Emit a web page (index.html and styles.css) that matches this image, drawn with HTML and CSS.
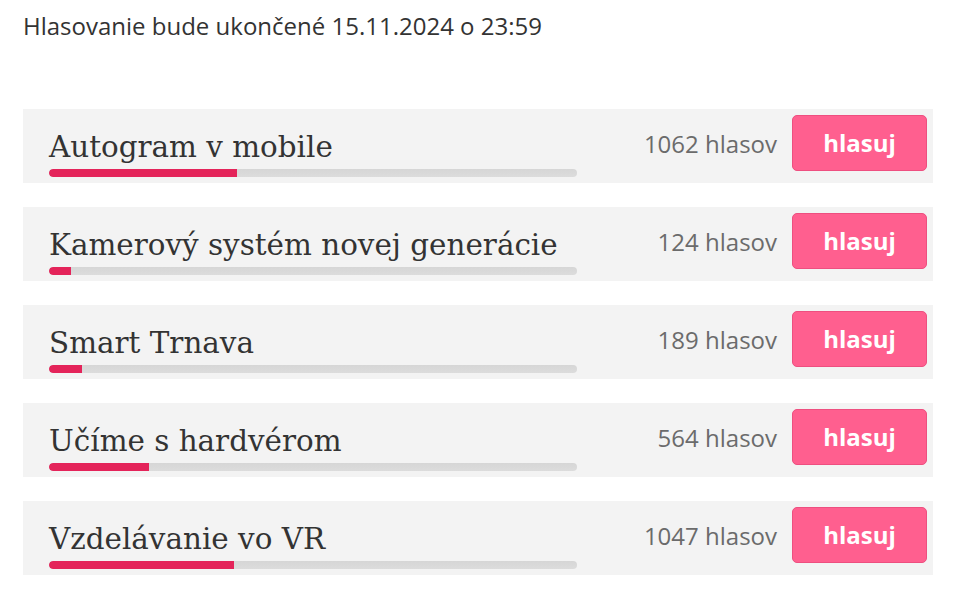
FILE: index.html
```html
<!DOCTYPE html>
<html lang="sk">
<head>
<meta charset="utf-8">
<link rel="stylesheet" href="styles.css">
</head>
<body>
<div class="page">
  <p class="deadline">Hlasovanie bude ukončené 15.11.2024 o 23:59</p>
  <ul class="poll">
    <li class="row">
      <div class="info">
        <div class="title">Autogram v mobile</div>
        <div class="bar"><div class="fill" style="width:35.57%"></div></div>
      </div>
      <div class="votes">1062 hlasov</div>
      <button class="vote">hlasuj</button>
    </li>
    <li class="row">
      <div class="info">
        <div class="title">Kamerový systém novej generácie</div>
        <div class="bar"><div class="fill" style="width:4.15%"></div></div>
      </div>
      <div class="votes">124 hlasov</div>
      <button class="vote">hlasuj</button>
    </li>
    <li class="row">
      <div class="info">
        <div class="title">Smart Trnava</div>
        <div class="bar"><div class="fill" style="width:6.33%"></div></div>
      </div>
      <div class="votes">189 hlasov</div>
      <button class="vote">hlasuj</button>
    </li>
    <li class="row">
      <div class="info">
        <div class="title">Učíme s hardvérom</div>
        <div class="bar"><div class="fill" style="width:18.89%"></div></div>
      </div>
      <div class="votes">564 hlasov</div>
      <button class="vote">hlasuj</button>
    </li>
    <li class="row">
      <div class="info">
        <div class="title">Vzdelávanie vo VR</div>
        <div class="bar"><div class="fill" style="width:35.06%"></div></div>
      </div>
      <div class="votes">1047 hlasov</div>
      <button class="vote">hlasuj</button>
    </li>
  </ul>
</div>
</body>
</html>
```
FILE: styles.css
```css
* { box-sizing: border-box; }
html, body { margin: 0; padding: 0; background: #fff; }
body { font-family: "Open Sans", sans-serif; color: #333; }
.page { padding: 0 32px 0 23px; }
.deadline {
  margin: 0;
  padding: 10px 0 0 0;
  font-size: 24px;
  line-height: 32px;
  color: #333;
}
.poll {
  list-style: none;
  margin: 67px 0 0 0;
  padding: 0;
  display: flex;
  flex-direction: column;
  gap: 24px;
}
.row {
  display: flex;
  align-items: flex-start;
  background: #f3f3f3;
  height: 74px;
  padding: 6px 6px 0 26px;
}
.info { width: 528px; padding-top: 14px; }
.title {
  font-family: "DejaVu Serif", serif;
  font-size: 29.4px;
  line-height: 36px;
  color: #333;
  white-space: nowrap;
}
.bar {
  margin-top: 4px;
  height: 8px;
  border-radius: 4px;
  background: linear-gradient(#d6d6d6, #dcdcdc);
  overflow: hidden;
}
.fill { height: 100%; background: #e4245a; border-radius: 4px 0 0 4px; }
.votes {
  flex: 1;
  text-align: right;
  padding-top: 13px;
  padding-right: 15px;
  font-size: 24px;
  line-height: 32px;
  color: #6b6b6b;
  white-space: nowrap;
}
.vote {
  flex: none;
  width: 135px;
  height: 56px;
  border: 1px solid #ee4f80;
  border-radius: 5px;
  background: #ff5f8f;
  color: #fff;
  font-family: "Open Sans", sans-serif;
  font-weight: 700;
  font-size: 24px;
  line-height: 32px;
  padding: 0;
}
```
